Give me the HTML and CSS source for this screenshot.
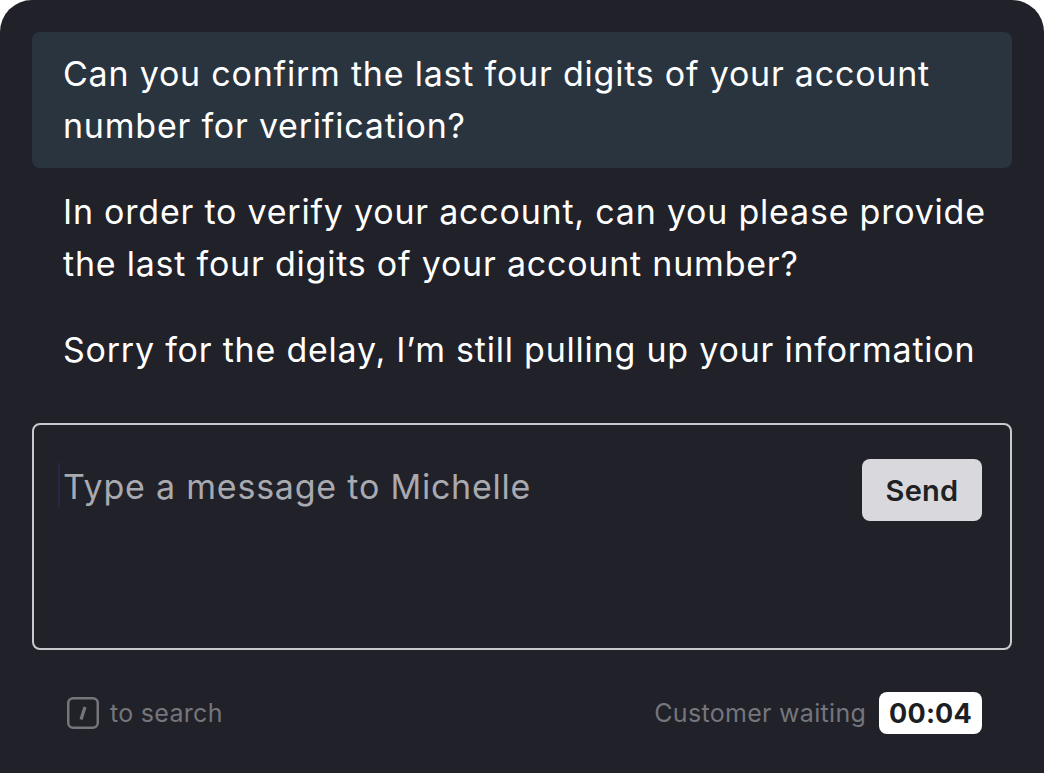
FILE: index.html
```html
<!DOCTYPE html>
<html>
<head>
<meta charset="utf-8">
<link rel="stylesheet" href="styles.css">
</head>
<body>
<div class="panel">
  <div class="messages">
    <div class="msg msg-active">Can you confirm the last four digits of your account number for verification?</div>
    <div class="msg">In order to verify your account, can you please provide the last four digits of your account number?</div>
    <div class="msg">Sorry for the delay, I’m still pulling up your information</div>
  </div>
  <div class="composer">
    <div class="input-row">
      <div class="placeholder"><span class="caret"></span>Type a message to Michelle</div>
      <button class="send">Send</button>
    </div>
  </div>
  <div class="footer">
    <div class="hint">
      <svg class="key" width="32" height="32" viewBox="0 0 32 32" aria-label="/">
        <rect x="1.25" y="1.25" width="29.5" height="29.5" rx="5" fill="none" stroke="#75757c" stroke-width="2.5"/>
        <line x1="18" y1="10" x2="14" y2="22.5" stroke="#75757c" stroke-width="3.2" stroke-linecap="butt"/>
      </svg>
      <span>to search</span>
    </div>
    <div class="waiting">
      <span>Customer waiting</span>
      <span class="timer">00:04</span>
    </div>
  </div>
</div>
</body>
</html>
```

FILE: styles.css
```css
html, body {
  margin: 0;
  padding: 0;
  background: #ffffff;
}
body {
  font-family: Inter, "Noto Sans", "Liberation Sans", sans-serif;
  width: 1044px;
  height: 773px;
  overflow: hidden;
}
.panel {
  background: #202129;
  border-radius: 32px 32px 0 0;
  height: 800px;
  padding: 32px 32px 0 32px;
  box-sizing: border-box;
}
.messages {
  display: flex;
  flex-direction: column;
  gap: 2px;
}
.msg {
  color: #ffffff;
  font-size: 34px;
  line-height: 52px;
  padding: 16px 16px 16px 31px;
  border-radius: 8px;
  letter-spacing: 0.78px;
}
.msg-active {
  background: #29343f;
}
.composer {
  margin-top: 31px;
  height: 227px;
  box-sizing: border-box;
  border: 2px solid #c9c9cd;
  border-radius: 8px;
  padding: 34px 28px 0 29px;
}
.input-row {
  display: flex;
  justify-content: space-between;
  align-items: flex-start;
}
.placeholder {
  color: #a9a9b0;
  font-size: 34px;
  line-height: 52px;
  letter-spacing: 0.78px;
  margin-top: 2px;
  position: relative;
}
.caret {
  position: absolute;
  left: -5px;
  top: 2px;
  width: 2px;
  height: 44px;
  background: #232a44;
}
.send {
  background: #d9d9dd;
  border: none;
  border-radius: 8px;
  width: 120px;
  height: 62px;
  font-family: inherit;
  font-size: 29px;
  font-weight: 600;
  letter-spacing: 0.3px;
  color: #202124;
  padding: 0;
  margin: 0;
}
.footer {
  display: flex;
  justify-content: space-between;
  align-items: center;
  padding: 42px 30px 0 35px;
}
.hint, .waiting {
  display: flex;
  align-items: center;
  color: #75757c;
  font-size: 25px;
  letter-spacing: 0.3px;
}
.key {
  display: block;
  margin-right: 11px;
}
.timer {
  background: #ffffff;
  color: #1e1f24;
  font-size: 27px;
  font-weight: 700;
  letter-spacing: 0.2px;
  border-radius: 8px;
  padding: 0 10px;
  height: 42px;
  display: inline-flex;
  align-items: center;
  margin-left: 13px;
}
```
